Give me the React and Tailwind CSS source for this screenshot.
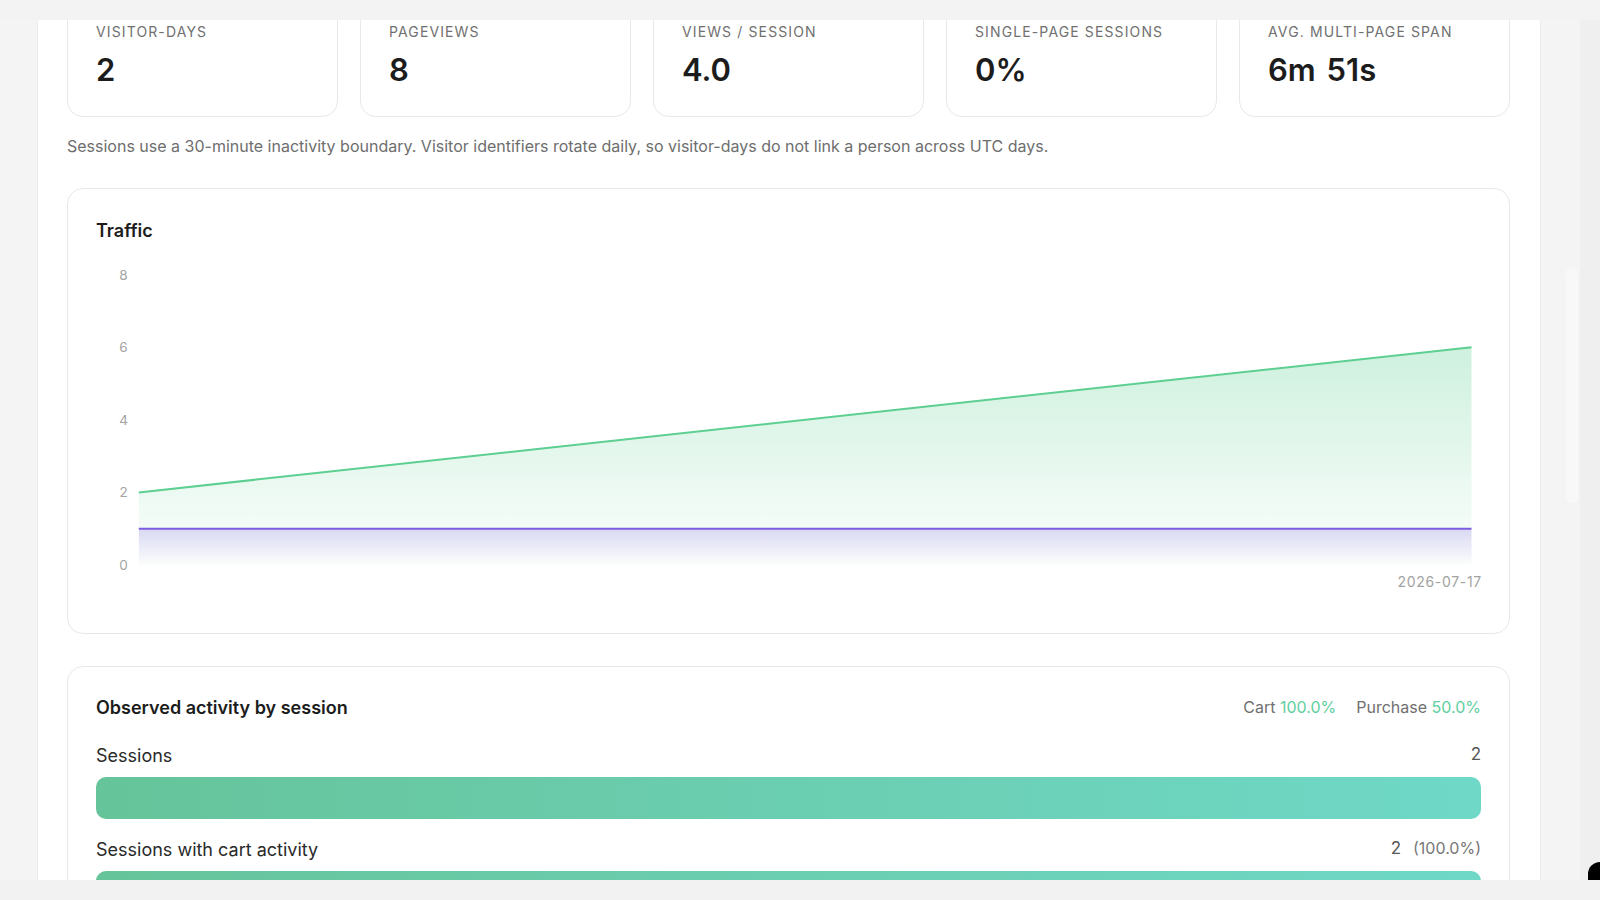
import React from 'react';

const stats = [
    { label: 'Visitor-days', value: '2' },
    { label: 'Pageviews', value: '8' },
    { label: 'Views / session', value: '4.0' },
    { label: 'Single-page sessions', value: '0%' },
    { label: 'Avg. multi-page span', value: '6m 51s' },
];

// chart geometry (svg units == px)
const W = 1386;
const H = 360;
const X0 = 42.8;
const X1 = 1375.5;
const yOf = (v) => 320 - 36.3 * v;

function TrafficChart() {
    const ticks = [0, 2, 4, 6, 8];
    return (
        <svg width={W} height={H} viewBox={`0 0 ${W} ${H}`} className="block">
            <defs>
                <linearGradient id="gGreen" x1="0" y1="0" x2="0" y2="1">
                    <stop offset="0%" stopColor="#5ccf91" stopOpacity="0.3" />
                    <stop offset="100%" stopColor="#5ccf91" stopOpacity="0.02" />
                </linearGradient>
                <linearGradient id="gPurple" x1="0" y1="0" x2="0" y2="1">
                    <stop offset="0%" stopColor="#7c5ce0" stopOpacity="0.22" />
                    <stop offset="100%" stopColor="#7c5ce0" stopOpacity="0" />
                </linearGradient>
            </defs>
            {ticks.map((t) => (
                <text
                    key={t}
                    x="27.5"
                    y={yOf(t)}
                    textAnchor="middle"
                    dominantBaseline="central"
                    fontSize="13.5"
                    fill="#a3a3a3"
                    fontFamily="Inter, sans-serif"
                >
                    {t}
                </text>
            ))}
            <polygon
                points={`${X0},${yOf(2)} ${X1},${yOf(6)} ${X1},${yOf(0)} ${X0},${yOf(0)}`}
                fill="url(#gGreen)"
            />
            <line x1={X0} y1={yOf(2)} x2={X1} y2={yOf(6)} stroke="#5ccf91" strokeWidth="2" />
            <rect x={X0} y={yOf(1)} width={X1 - X0} height={yOf(0) - yOf(1)} fill="url(#gPurple)" />
            <line x1={X0} y1={yOf(1)} x2={X1} y2={yOf(1)} stroke="#7c5ce0" strokeWidth="2" />
            <text
                x={W}
                y="336.6"
                textAnchor="end"
                dominantBaseline="central"
                fontSize="14"
                fill="#a3a3a3"
                fontFamily="Inter, sans-serif"
                letterSpacing="0.7"
            >
                2026-07-17
            </text>
        </svg>
    );
}

function ActivityRow({ label, count, pct }) {
    return (
        <div className="mt-[18px] first:mt-0">
            <div className="flex justify-between items-center h-6">
                <span className="text-[18px] text-[#2a2a2a]">{label}</span>
                <span className="text-[17px] text-[#555]">
                    {count}
                    {pct && <span className="ml-3 text-[16px] text-[#777]">({pct})</span>}
                </span>
            </div>
            <div className="mt-[10px] h-[42px] w-full rounded-[10px] bg-gradient-to-r from-[#66c49a] to-[#6fd8c7]" />
        </div>
    );
}

export default function App() {
    return (
        <div className="flex flex-col h-screen w-full bg-[#f3f3f3] overflow-hidden" style={{ fontFamily: 'Inter, "Noto Sans", sans-serif' }}>
            <div className="h-[20px] shrink-0 bg-[#f3f3f3]" />

            <div className="flex flex-1 min-h-0">
                {/* left strip */}
                <div className="w-[38px] shrink-0 bg-[#f4f4f4] border-r border-[#ececec]" />

                {/* page */}
                <div className="w-[1502px] shrink-0 bg-white overflow-hidden">
                    <div className="mt-[-25px] pl-[29px] pr-[30px]">
                        <div className="grid grid-cols-5 gap-[22px]">
                            {stats.map((s) => (
                                <div key={s.label} className="rounded-2xl border border-[#e8e8e8] bg-white px-7 pt-7 pb-7">
                                    <p className="text-[14px] leading-4 uppercase tracking-[0.08em] text-[#707070]">{s.label}</p>
                                    <p className="mt-3 text-[31px] leading-9 font-semibold text-[#1c1c1c] [word-spacing:3px]">{s.value}</p>
                                </div>
                            ))}
                        </div>

                        <p className="mt-[19px] text-[16px] leading-5 text-[#6e6e6e]">
                            Sessions use a 30-minute inactivity boundary. Visitor identifiers rotate daily, so visitor-days do not link a person across UTC days.
                        </p>

                        <div className="mt-8 rounded-2xl border border-[#e8e8e8] bg-white p-7">
                            <h2 className="text-[18px] leading-7 font-semibold text-[#1c1c1c]">Traffic</h2>
                            <TrafficChart />
                        </div>

                        <div className="mt-8 rounded-2xl border border-[#e8e8e8] bg-white p-7">
                            <div className="flex justify-between items-center h-6">
                                <h2 className="text-[18px] font-semibold text-[#1c1c1c]">Observed activity by session</h2>
                                <div className="flex items-center gap-5 text-[16px] text-[#707070]">
                                    <span>Cart <span className="text-[#5fcf9f]">100.0%</span></span>
                                    <span>Purchase <span className="text-[#5fcf9f]">50.0%</span></span>
                                </div>
                            </div>
                            <div className="mt-6">
                                <ActivityRow label="Sessions" count="2" />
                                <ActivityRow label="Sessions with cart activity" count="2" pct="100.0%" />
                            </div>
                        </div>
                    </div>
                </div>

                {/* right gutter with scrollbar */}
                <div className="w-[40px] shrink-0 bg-[#f4f4f4] border-l border-[#ececec] pt-[247px]">
                    <div className="ml-[25px] w-[12px] h-[236px] rounded-full bg-[#f8f8f8]" />
                </div>
                <div className="flex-1 bg-[#efefef] flex flex-col justify-end">
                    <div className="ml-auto w-[12px] h-[18px] bg-black rounded-tl-[12px]" />
                </div>
            </div>

            <div className="h-[20px] shrink-0 bg-[#f2f2f2]" />
        </div>
    );
}
